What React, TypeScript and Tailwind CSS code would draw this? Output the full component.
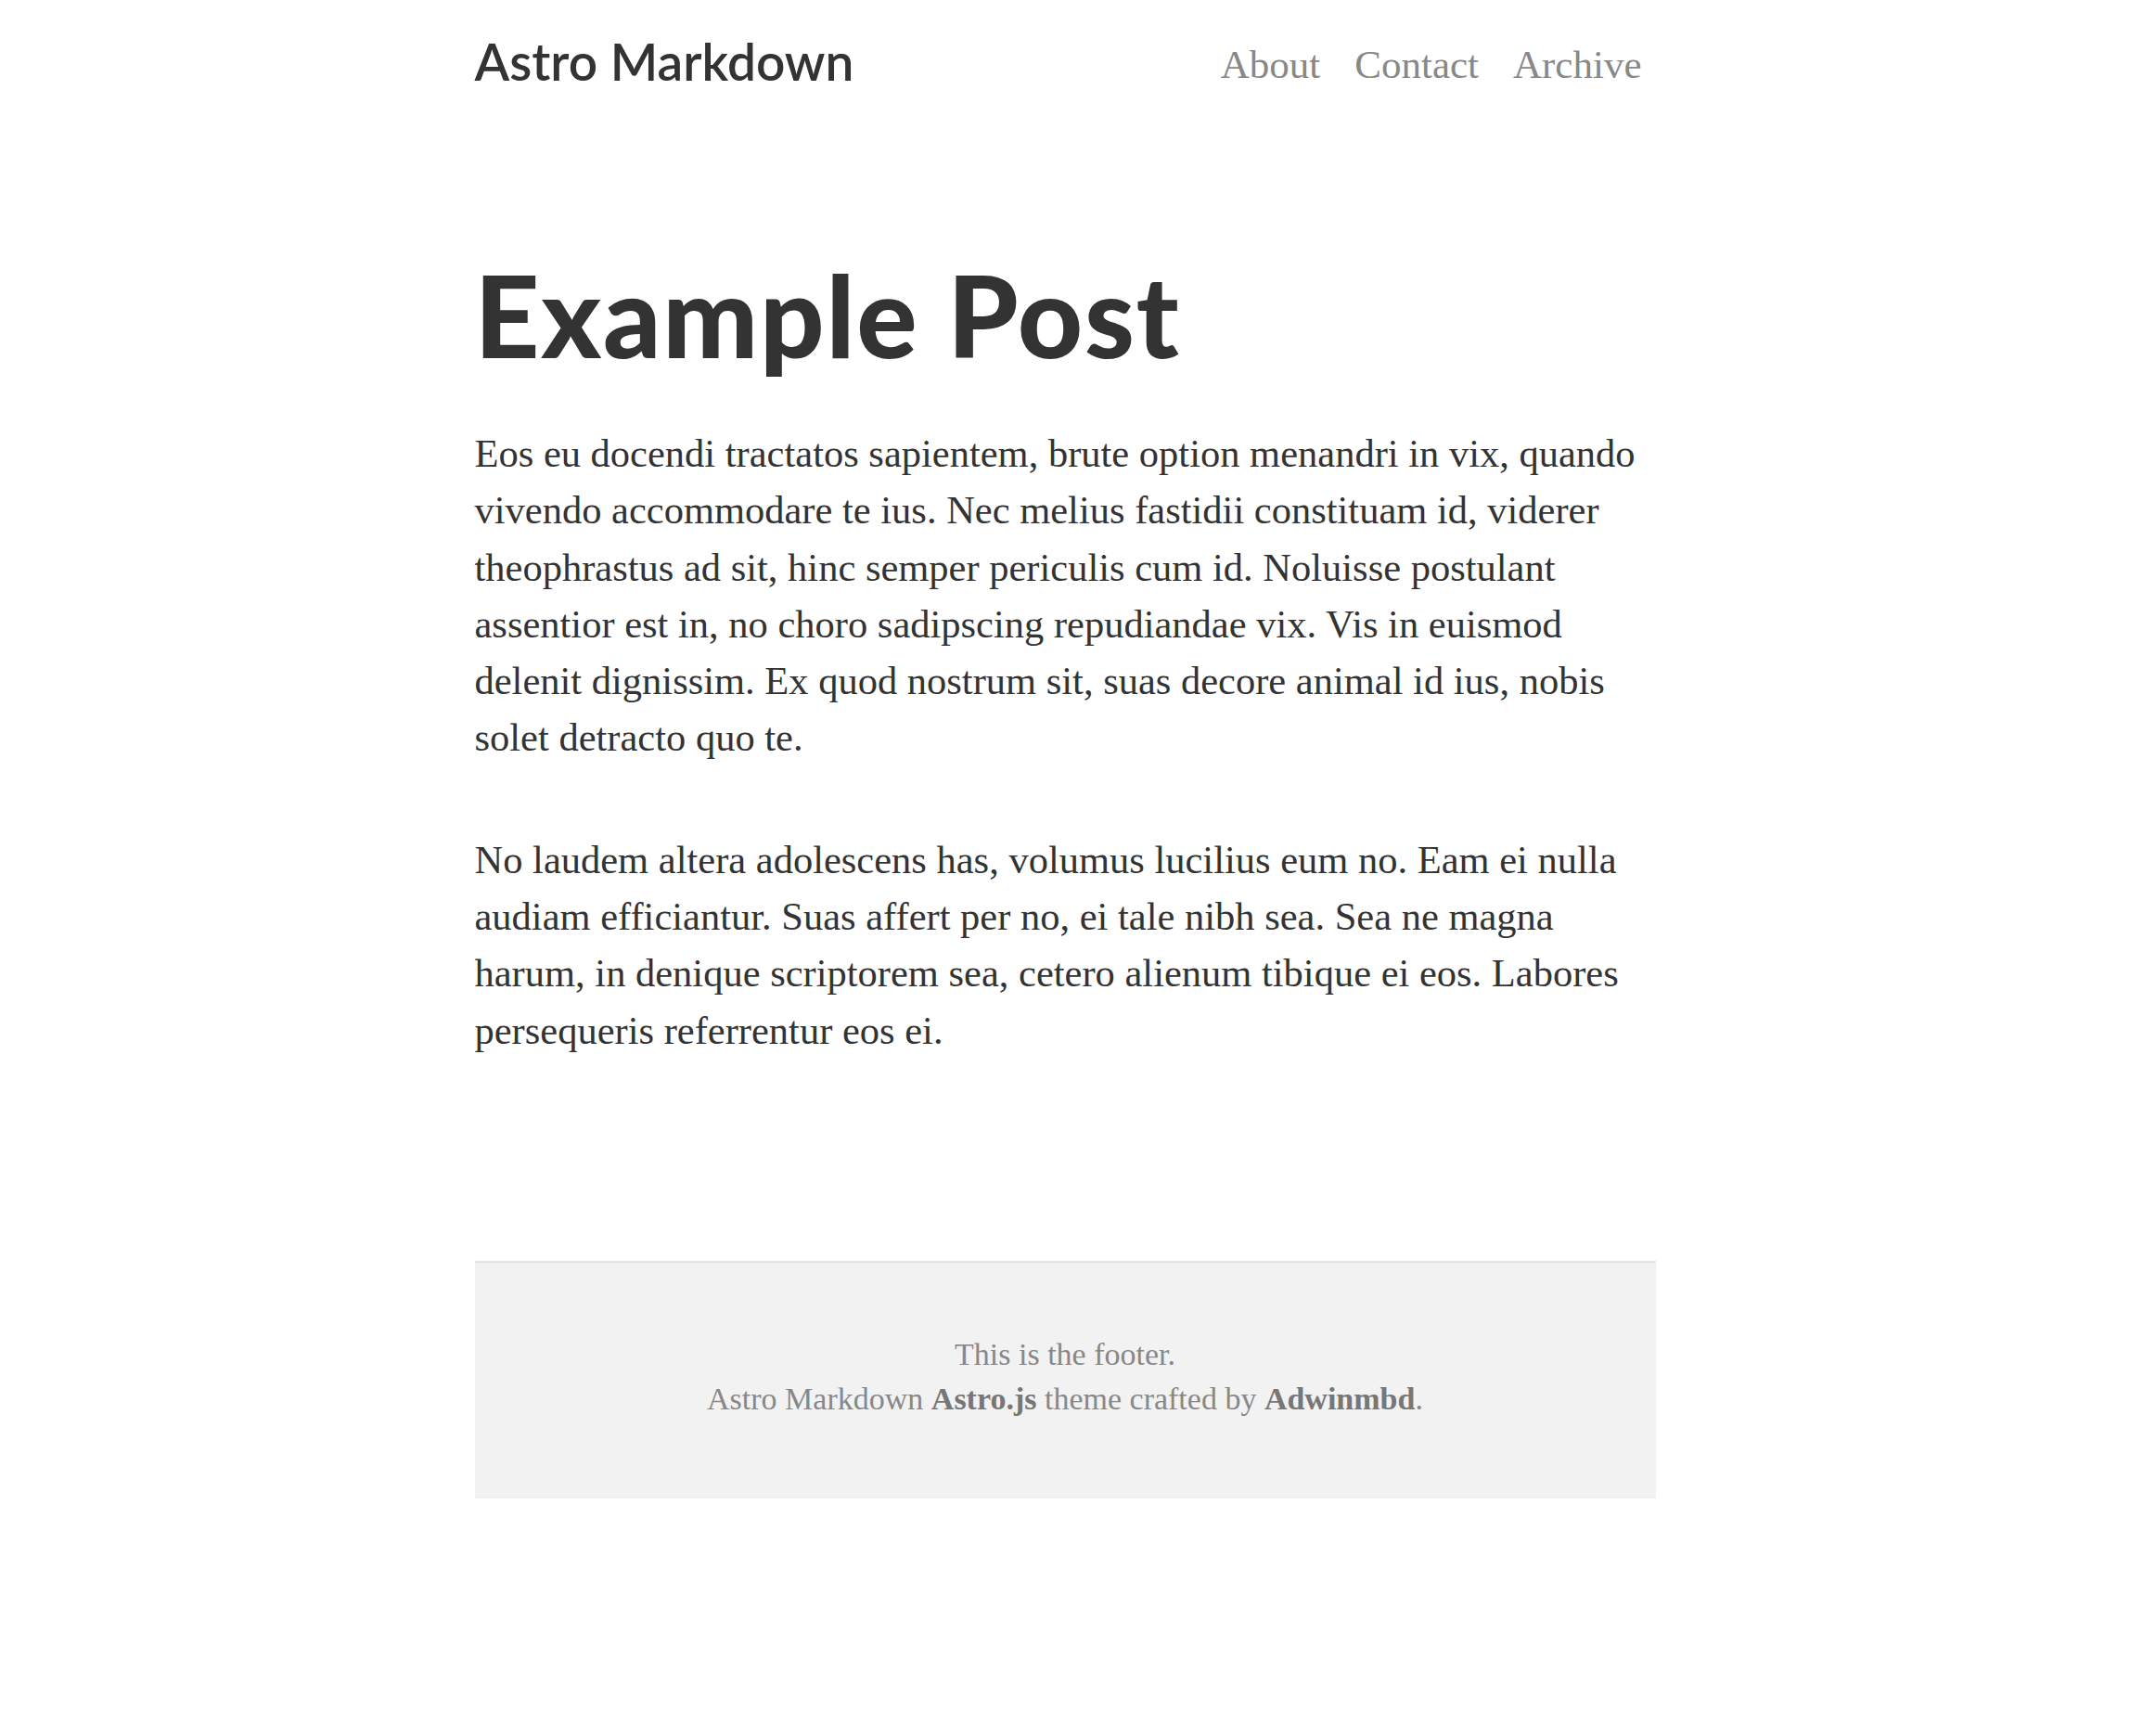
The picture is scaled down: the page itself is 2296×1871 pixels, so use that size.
export default function App() {
  return (
    <div className="min-h-screen bg-white font-['Liberation_Serif',serif] text-[#333]">
      <div className="mx-auto w-[1273px]">
        <header className="flex items-center justify-between pt-[26px]">
          <a href="#" className="font-['Lato',sans-serif] text-[55px] font-semibold leading-[80px] text-[#333]">
            Astro Markdown
          </a>
          <nav className="flex translate-y-[4px] gap-[37px] pr-[15px] text-[43px] text-[#888]">
            <a href="#">About</a>
            <a href="#">Contact</a>
            <a href="#">Archive</a>
          </nav>
        </header>

        <main className="pt-[172px]">
          <h1 className="font-['Lato',sans-serif] text-[122px] font-black leading-[122px] tracking-[1.8px] text-[#333]">
            Example Post
          </h1>
          <div className="mt-[58px] text-[42.5px] leading-[61.3px]">
            <p>
              Eos eu docendi tractatos sapientem, brute option menandri in vix, quando vivendo accommodare te ius. Nec
              melius fastidii constituam id, viderer theophrastus ad sit, hinc semper periculis cum id. Noluisse postulant
              assentior est in, no choro sadipscing repudiandae vix. Vis in euismod delenit dignissim. Ex quod nostrum sit,
              suas decore animal id ius, nobis solet detracto quo te.
            </p>
            <p className="mt-[70px]">
              No laudem altera adolescens has, volumus lucilius eum no. Eam ei nulla audiam efficiantur. Suas affert per no,
              ei tale nibh sea. Sea ne magna harum, in denique scriptorem sea, cetero alienum tibique ei eos. Labores
              persequeris referrentur eos ei.
            </p>
          </div>
        </main>

        <footer className="mt-[218px] flex h-[256px] flex-col items-center justify-center border-t-2 border-[#e2e2e2] bg-[#f2f2f2] pb-[8px] text-[34px] leading-[48px] text-[#888]">
          <p>This is the footer.</p>
          <p>
            Astro Markdown <a href="#" className="font-bold text-[#777]">Astro.js</a> theme crafted by{" "}
            <a href="#" className="font-bold text-[#777]">Adwinmbd</a>.
          </p>
        </footer>
      </div>
    </div>
  );
}
